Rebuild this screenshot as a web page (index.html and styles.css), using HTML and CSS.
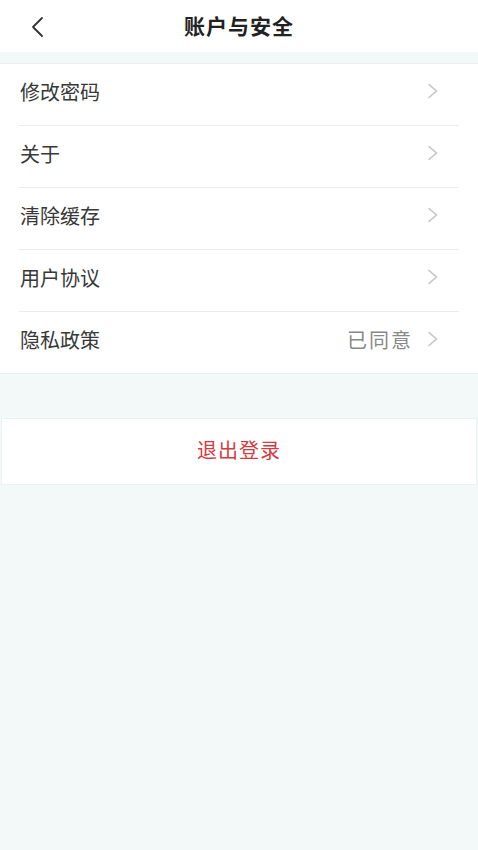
FILE: index.html
```html
<!DOCTYPE html>
<html lang="zh-CN">
<head>
<meta charset="utf-8">
<link rel="stylesheet" href="styles.css">
</head>
<body>
<div class="page">
  <header class="topbar">
    <span class="back">
      <svg width="14" height="22" viewBox="0 0 14 22"><path d="M12 2 L3 11 L12 20" fill="none" stroke="#333" stroke-width="1.8" stroke-linecap="round" stroke-linejoin="round"/></svg>
    </span>
    <h1 class="title">账户与安全</h1>
  </header>
  <div class="band"></div>
  <ul class="list">
    <li class="row"><span class="label">修改密码</span><span class="right"><svg class="chev" width="12" height="16" viewBox="0 0 12 16"><path d="M2 1.5 L9.5 8 L2 14.5" fill="none" stroke="#c4c4c4" stroke-width="1.6" stroke-linecap="round" stroke-linejoin="round"/></svg></span></li>
    <li class="row"><span class="label">关于</span><span class="right"><svg class="chev" width="12" height="16" viewBox="0 0 12 16"><path d="M2 1.5 L9.5 8 L2 14.5" fill="none" stroke="#c4c4c4" stroke-width="1.6" stroke-linecap="round" stroke-linejoin="round"/></svg></span></li>
    <li class="row"><span class="label">清除缓存</span><span class="right"><svg class="chev" width="12" height="16" viewBox="0 0 12 16"><path d="M2 1.5 L9.5 8 L2 14.5" fill="none" stroke="#c4c4c4" stroke-width="1.6" stroke-linecap="round" stroke-linejoin="round"/></svg></span></li>
    <li class="row"><span class="label">用户协议</span><span class="right"><svg class="chev" width="12" height="16" viewBox="0 0 12 16"><path d="M2 1.5 L9.5 8 L2 14.5" fill="none" stroke="#c4c4c4" stroke-width="1.6" stroke-linecap="round" stroke-linejoin="round"/></svg></span></li>
    <li class="row"><span class="label">隐私政策</span><span class="right"><span class="value">已同意</span><svg class="chev" width="12" height="16" viewBox="0 0 12 16"><path d="M2 1.5 L9.5 8 L2 14.5" fill="none" stroke="#c4c4c4" stroke-width="1.6" stroke-linecap="round" stroke-linejoin="round"/></svg></span></li>
  </ul>
  <div class="logout">退出登录</div>
</div>
</body>
</html>
```

FILE: styles.css
```css
* { box-sizing: border-box; }
html, body {
  margin: 0;
  padding: 0;
  background: #f3f8f8;
  font-family: "Noto Sans CJK SC", "Noto Sans", sans-serif;
}
.page {
  width: 478px;
  min-height: 850px;
  background: #f3f8f8;
}
.topbar {
  height: 52px;
  background: #fff;
  display: flex;
  align-items: center;
  justify-content: center;
  position: relative;
}
.back {
  position: absolute;
  left: 30px;
  top: 16px;
  display: flex;
}
.title {
  margin: 0;
  font-size: 21px;
  font-weight: 700;
  color: #222;
  letter-spacing: 1px;
  padding-bottom: 2px;
}
.band {
  height: 12px;
  background: #f3f8f8;
  border-bottom: 1px solid #eaf0f0;
}
.list {
  list-style: none;
  margin: 0;
  padding: 0 19px;
  background: #fff;
  border-bottom: 1px solid #e8eded;
}
.row {
  height: 62px;
  display: flex;
  align-items: center;
  justify-content: space-between;
  border-bottom: 1px solid #ececec;
  padding-bottom: 7px;
}
.row:last-child { border-bottom: none; height: 61px; }
.label {
  font-size: 20px;
  color: #383838;
  padding-left: 1px;
}
.right {
  display: flex;
  align-items: center;
  gap: 14px;
  padding-right: 20px;
}
.value {
  font-size: 20px;
  color: #888;
  letter-spacing: 2px;
}
.chev { display: block; }
.logout {
  margin: 44px 1px 0;
  height: 67px;
  background: #fff;
  border: 1px solid #edf1f1;
  display: flex;
  align-items: center;
  justify-content: center;
  font-size: 20px;
  color: #d23c40;
  letter-spacing: 1px;
  padding-bottom: 5px;
}
```
